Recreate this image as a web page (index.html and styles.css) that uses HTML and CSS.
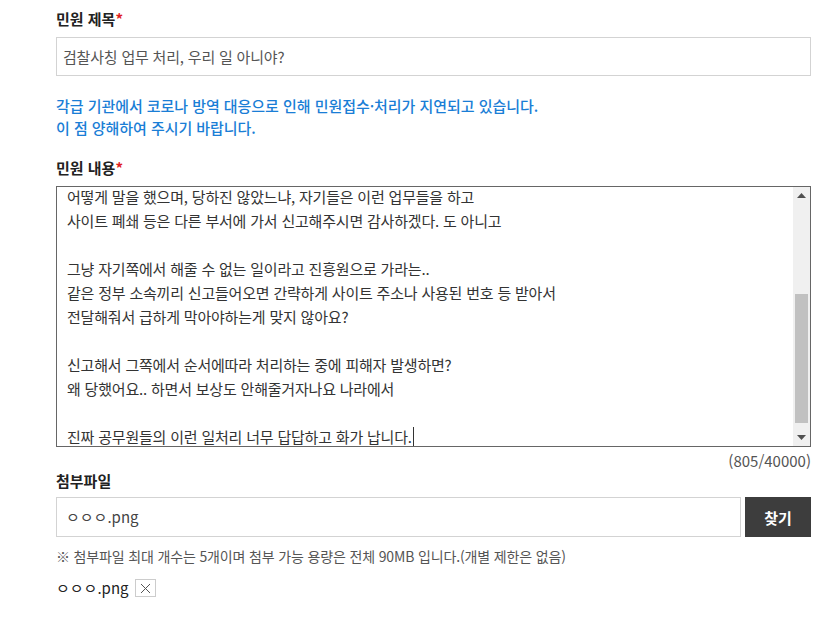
FILE: index.html
```html
<!DOCTYPE html>
<html lang="ko">
<head>
<meta charset="utf-8">
<link rel="stylesheet" href="styles.css">
</head>
<body>
<div class="form">
  <div class="label">민원 제목<span class="req">*</span></div>
  <div class="input">검찰사칭 업무 처리, 우리 일 아니야?</div>
  <p class="notice">각급 기관에서 코로나 방역 대응으로 인해 민원접수·처리가 지연되고 있습니다.<br>이 점 양해하여 주시기 바랍니다.</p>
  <div class="label label2">민원 내용<span class="req">*</span></div>
  <div class="textarea">
    <div class="ta-text">
      <div class="ta-lines">어떻게 말을 했으며, 당하진 않았느냐, 자기들은 이런 업무들을 하고<br>사이트 폐쇄 등은 다른 부서에 가서 신고해주시면 감사하겠다. 도 아니고<br><br>그냥 자기쪽에서 해줄 수 없는 일이라고 진흥원으로 가라는..<br>같은 정부 소속끼리 신고들어오면 간략하게 사이트 주소나 사용된 번호 등 받아서<br>전달해줘서 급하게 막아야하는게 맞지 않아요?<br><br>신고해서 그쪽에서 순서에따라 처리하는 중에 피해자 발생하면?<br>왜 당했어요.. 하면서 보상도 안해줄거자나요 나라에서<br><br>진짜 공무원들의 이런 일처리 너무 답답하고 화가 납니다.<span class="caret"></span></div>
    </div>
    <div class="scrollbar">
      <div class="sb-btn"><svg width="9" height="5" viewBox="0 0 9 5"><path d="M0 5 L4.5 0 L9 5 Z" fill="#505050"/></svg></div>
      <div class="sb-track"><div class="sb-thumb"></div></div>
      <div class="sb-btn"><svg width="9" height="5" viewBox="0 0 9 5"><path d="M0 0 L9 0 L4.5 5 Z" fill="#505050"/></svg></div>
    </div>
  </div>
  <div class="counter">(805/40000)</div>
  <div class="label label3">첨부파일</div>
  <div class="file-row">
    <div class="file-input">ㅇㅇㅇ.png</div>
    <button class="btn">찾기</button>
  </div>
  <p class="file-note">※ 첨부파일 최대 개수는 5개이며 첨부 가능 용량은 전체 90MB 입니다.(개별 제한은 없음)</p>
  <div class="file-item">ㅇㅇㅇ.png <span class="del"><svg width="11" height="11" viewBox="0 0 11 11"><path d="M1 1 L10 10 M10 1 L1 10" stroke="#555" stroke-width="1"/></svg></span></div>
</div>
</body>
</html>
```
FILE: styles.css
```css
* { box-sizing: border-box; }
html, body { margin: 0; padding: 0; background: #fff; }
body {
  font-family: "Noto Sans CJK KR", "Noto Sans", sans-serif;
  font-size: 15px;
  color: #333;
}
.form {
  width: 755px;
  margin-left: 56px;
  padding-top: 8px;
  display: flex;
  flex-direction: column;
}
.label {
  font-weight: bold;
  color: #222;
  line-height: 21px;
  height: 21px;
  margin-bottom: 8px;
}
.req { color: #e02020; }
.input {
  height: 39px;
  border: 1px solid #d3d3d3;
  padding: 0 6px;
  line-height: 37px;
  color: #555;
  letter-spacing: -0.2px;
}
.notice {
  margin: 19px 0 0;
  color: #1a7ed6;
  line-height: 22px;
  font-weight: 500;
  letter-spacing: -0.05px;
}
.label2 { margin-top: 18px; }
.textarea {
  height: 261px;
  border: 1px solid #666;
  display: flex;
  overflow: hidden;
}
.ta-text {
  flex: 1;
  overflow: hidden;
  padding: 0 10px;
}
.ta-lines {
  margin-top: -2px;
  line-height: 24px;
  color: #333;
  white-space: nowrap;
  letter-spacing: -0.2px;
}
.caret {
  display: inline-block;
  width: 1px;
  height: 22px;
  background: #333;
  vertical-align: -6px;
  margin-left: 1px;
}
.scrollbar {
  width: 17px;
  background: #f0f0f0;
  display: flex;
  flex-direction: column;
}
.sb-btn {
  height: 17px;
  display: flex;
  align-items: center;
  justify-content: center;
}
.sb-track {
  flex: 1;
  padding: 90px 2px 6px;
  display: flex;
}
.sb-thumb {
  flex: 1;
  background: #c1c1c1;
}
.counter {
  text-align: right;
  color: #555;
  line-height: 20px;
  margin-top: 4px;
}
.label3 {
  margin-top: -1px;
  margin-bottom: 6px;
}
.file-row {
  display: flex;
  gap: 4px;
  height: 40px;
}
.file-input {
  flex: 1;
  border: 1px solid #d3d3d3;
  padding: 0 9px;
  line-height: 38px;
  color: #444;
}
.btn {
  width: 66px;
  border: none;
  background: #3d3d3d;
  color: #fff;
  font-family: inherit;
  font-size: 15px;
  font-weight: bold;
  padding: 0;
}
.file-note {
  margin: 9px 0 0;
  font-size: 14px;
  color: #555;
  line-height: 20px;
  letter-spacing: -0.15px;
}
.file-item {
  margin-top: 12px;
  line-height: 20px;
  color: #222;
  display: flex;
  align-items: center;
  gap: 6px;
}
.del {
  width: 21px;
  height: 18px;
  border: 1px solid #ccc;
  display: inline-flex;
  align-items: center;
  justify-content: center;
}
```
